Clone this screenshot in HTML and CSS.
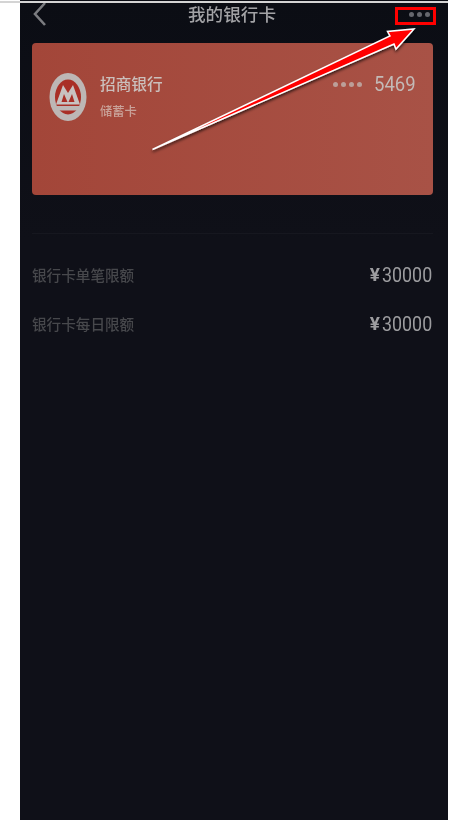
FILE: index.html
```html
<!DOCTYPE html>
<html lang="zh">
<head>
<meta charset="utf-8">
<title>我的银行卡</title>
<link rel="stylesheet" href="styles.css">
</head>
<body>
<main class="phone">
  <header class="nav">
    <svg class="back" width="14" height="24" viewBox="0 0 14 24"><path d="M12 1 2 12l10 11" fill="none" stroke="#7b7c80" stroke-width="2.600"/></svg>
    <h1 class="title">我的银行卡</h1>
    <div class="more"><i></i><i></i><i></i></div>
  </header>
  <section class="card">
    <svg class="logo" width="38" height="48" viewBox="0 0 38 48">
      <ellipse cx="19" cy="24" rx="18.500" ry="24" fill="#bdb7b5"/>
      <ellipse cx="19" cy="24" rx="13" ry="17.500" fill="#a92f26"/>
      <path d="M6 33h26l-2 4.500H8z" fill="#bdb7b5"/>
      <path d="M7 31.500 14 12l5 8 5-8 7 19.500z" fill="#c8c2c0"/>
      <path d="M12.500 29 15 21l3.500 8zM19.500 29 23 21l2.500 8z" fill="#a92f26"/>
    </svg>
    <div class="bank">
      <div class="bank-name">招商银行</div>
      <div class="bank-type">储蓄卡</div>
    </div>
    <div class="number">
      <span class="mask"><i></i><i></i><i></i><i></i></span>
      <span class="digits">5469</span>
    </div>
  </section>
  <div class="divider"></div>
  <section class="limits">
    <div class="row"><span class="label">银行卡单笔限额</span><span class="value"><b class="yen">¥</b><span class="amount">30000</span></span></div>
    <div class="row"><span class="label">银行卡每日限额</span><span class="value"><b class="yen">¥</b><span class="amount">30000</span></span></div>
  </section>
</main>
<div class="top-line"></div>
<div class="mark"></div>
<svg class="arrow" width="458" height="160" viewBox="0 0 458 160">
  <defs><filter id="s" x="-10%" y="-10%" width="120%" height="130%"><feDropShadow dx="0" dy="2" stdDeviation="1.500" flood-color="#000" flood-opacity=".7"/></filter></defs>
  <path d="M152.500 149.500 390 36 387.500 31.500 414 29 396 49 394 44Z" fill="#f00" stroke="#fff" stroke-width="1.500" stroke-linejoin="miter" filter="url(#s)"/>
</svg>
</body>
</html>
```

FILE: styles.css
```css
* { box-sizing: border-box; }
html, body { margin: 0; height: 100%; background: #fff; overflow: hidden; }
body { position: relative; font-family: "Liberation Sans", "Noto Sans CJK SC", sans-serif; }
.phone {
  margin: 0 0 0 20px;
  width: 428px;
  height: 820px;
  background: linear-gradient(180deg, #0b0d14 0, #0f1018 240px);
  padding: 2px 15px 0 12px;
}
.nav {
  height: 41px;
  display: flex;
  align-items: flex-start;
  justify-content: space-between;
  position: relative;
}
.back { margin: 0 0 0 1px; }
.title {
  margin: 0;
  position: absolute;
  left: 156px;
  top: 0;
  font: 500 17.600px/24px "Noto Sans CJK SC", sans-serif;
  color: #a2a2a5;
  filter: blur(.5px);
}
.more { display: flex; gap: 3px; margin: 10px 3px 0 0; }
.more i { width: 5px; height: 5px; border-radius: 50%; background: #66676e; filter: blur(.6px); }
.card {
  height: 152px;
  width: 401px;
  border-radius: 4px;
  background: linear-gradient(90deg, #a34639, #a85246);
  display: flex;
  align-items: flex-start;
  padding: 29px 18px 0 17px;
}
.logo { flex: none; margin-top: 1px; }
.bank { margin-left: 13px; flex: 1; }
.bank-name { font: 500 15.700px/24px "Noto Sans CJK SC", sans-serif; color: #cbbfbc; filter: blur(.5px); }
.bank-type { font: 500 12.300px/18px "Noto Sans CJK SC", sans-serif; color: #c9a299; margin-top: 6px; filter: blur(.5px); }
.number { display: flex; align-items: center; gap: 12px; }
.mask { display: flex; gap: 3px; }
.mask i { width: 5px; height: 5px; border-radius: 50%; background: #bc9f99; filter: blur(.5px); }
.digits { display: block; width: 41px; font: 400 21px/24px "Roboto", sans-serif; color: #c3bab7; transform: scaleX(.88); transform-origin: left; filter: blur(.4px); }
.divider { height: 1px; background: #16171f; margin-top: 38px; width: 401px; }
.limits { width: 400px; padding-top: 29px; display: flex; flex-direction: column; gap: 25px; }
.row { display: flex; justify-content: space-between; align-items: center; height: 24px; }
.label { font: 500 14.600px/24px "Noto Sans CJK SC", sans-serif; color: #47484c; filter: blur(.5px); }
.value { display: flex; align-items: center; gap: 2px; color: #9c9c9f; filter: blur(.4px); }
.yen { font: 700 19px/24px "Roboto", sans-serif; }
.amount { display: block; width: 50px; font: 400 21px/24px "Roboto", sans-serif; transform: scaleX(.85); transform-origin: left; }
.top-line { position: absolute; left: 0; top: 1px; width: 448px; height: 2px; background: #d4d4d4; }
.mark { position: absolute; left: 395px; top: 7px; width: 41px; height: 18px; border: 3px solid #f00; }
.arrow { position: absolute; left: 0; top: 0; }
```
